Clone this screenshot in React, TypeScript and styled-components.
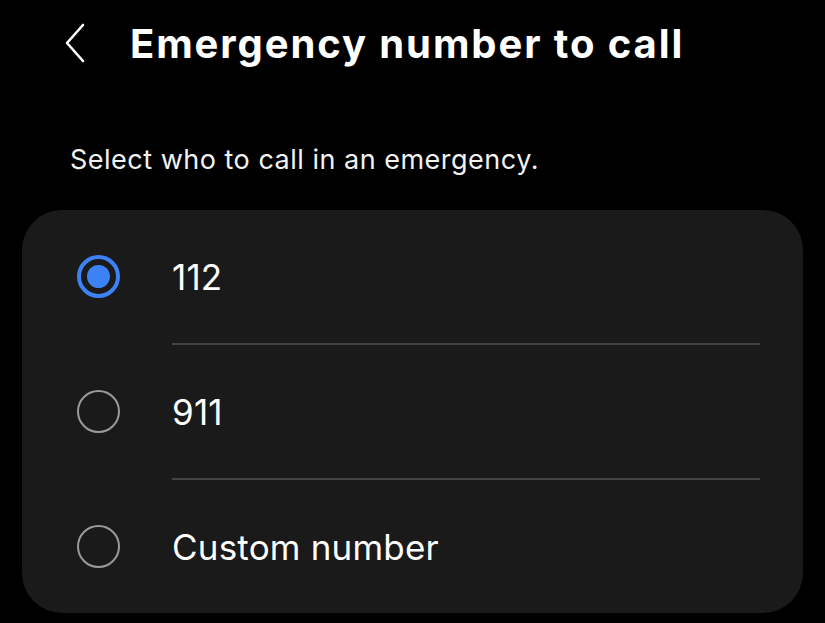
import React from "react";
import styled, { createGlobalStyle } from "styled-components";

const Global = createGlobalStyle`
  html, body { margin: 0; padding: 0; background: #000; }
  body { font-family: "Inter", "Roboto", "Noto Sans", sans-serif; color: #fff; }
`;

const Page = styled.div`
  width: 825px;
  height: 623px;
  background: #000;
  display: flex;
  flex-direction: column;
  overflow: hidden;
`;

const Header = styled.div`
  height: 86px;
  display: flex;
  align-items: center;
  padding-left: 62px;
  gap: 42px;
`;

const BackButton = styled.div`
  width: 26px;
  height: 40px;
  display: flex;
  align-items: center;
  justify-content: center;
`;

const Title = styled.h1`
  margin: 0;
  font-size: 40px;
  font-weight: 700;
  letter-spacing: 1.9px;
  color: #fff;
`;

const Subtitle = styled.p`
  margin: 54px 0 0 70px;
  font-size: 27px;
  font-weight: 400;
  letter-spacing: 0.5px;
  line-height: 40px;
  color: #f2f2f2;
`;

const Card = styled.div`
  margin: 30px 22px 0 22px;
  background: #1a1a1a;
  border-radius: 40px;
  display: flex;
  flex-direction: column;
`;

const Row = styled.div`
  height: 133px;
  display: flex;
  align-items: center;
  padding-left: 55px;
  gap: 52px;
`;

const RadioOuter = styled.div<{ $checked?: boolean }>`
  width: 43px;
  height: 43px;
  box-sizing: border-box;
  border-radius: 50%;
  border: ${(p) => (p.$checked ? "4px solid #3d82f5" : "2.5px solid #9a9a9a")};
  display: flex;
  align-items: center;
  justify-content: center;
`;

const RadioDot = styled.div`
  width: 23px;
  height: 23px;
  border-radius: 50%;
  background: #3d82f5;
`;

const Label = styled.span`
  font-size: 35px;
  font-weight: 400;
  letter-spacing: 0.2px;
  color: #fff;
`;

const Divider = styled.div`
  height: 2px;
  background: #444;
  margin: 0 43px 0 150px;
`;

const options = [
  { label: "112", checked: true },
  { label: "911", checked: false },
  { label: "Custom number", checked: false },
];

export default function App() {
  return (
    <Page>
      <Global />
      <Header>
        <BackButton>
          <svg width="24" height="40" viewBox="0 0 24 40" fill="none">
            <path d="M20 2 L4 20 L20 38" stroke="#fff" strokeWidth="2.6" strokeLinecap="round" strokeLinejoin="round" />
          </svg>
        </BackButton>
        <Title>Emergency number to call</Title>
      </Header>
      <Subtitle>Select who to call in an emergency.</Subtitle>
      <Card>
        {options.map((o, i) => (
          <React.Fragment key={o.label}>
            {i > 0 && <Divider />}
            <Row>
              <RadioOuter $checked={o.checked}>{o.checked && <RadioDot />}</RadioOuter>
              <Label>{o.label}</Label>
            </Row>
          </React.Fragment>
        ))}
      </Card>
    </Page>
  );
}
